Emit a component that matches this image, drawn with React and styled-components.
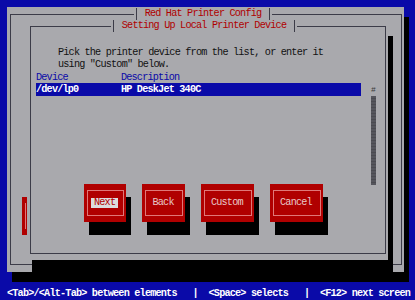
import React from 'react';
import styled, { createGlobalStyle } from 'styled-components';

const CH = 5.31;
const BLUE = '#0a0aa8';
const GRAY = '#a9a9ad';
const RED = '#b00000';
const LINE = '#3c3c48';

const GlobalStyle = createGlobalStyle`
  html, body {
    margin: 0;
    padding: 0;
    background: ${BLUE};
  }
`;

const Screen = styled.div`
  width: 415px;
  height: 300px;
  display: flex;
  flex-direction: column;
  overflow: hidden;
  background: ${BLUE};
  font-family: "Liberation Mono", "DejaVu Sans Mono", monospace;
  font-size: 10.2px;
  letter-spacing: -0.81px;
`;

const Desktop = styled.div`
  flex: 1;
  padding: 7px 0 0 7px;
`;

const Window = styled.div`
  width: ${(p) => p.$w}px;
  height: ${(p) => p.$h}px;
  box-sizing: border-box;
  display: flex;
  background: ${GRAY};
  box-shadow: ${(p) => p.$shadow};
  padding: ${(p) => p.$pad};
`;

const Frame = styled.div`
  flex: 1;
  display: flex;
  flex-direction: column;
  border: 1px solid ${LINE};
`;

const TitleTab = styled.div`
  position: relative;
  align-self: center;
  margin: -7px ${(p) => p.$shift}px 0 0;
  height: 12px;
  line-height: 12px;
  padding: 0 ${2 * CH}px;
  background: ${GRAY};
  color: ${RED};
  white-space: pre;

  &::before,
  &::after {
    content: '';
    position: absolute;
    top: 0;
    bottom: 0;
    width: 1px;
    background: ${LINE};
  }
  &::before { left: 2px; }
  &::after { right: 2px; }
`;

const Body = styled.div`
  display: flex;
  margin-top: 4px;
`;

const PeekButton = styled.div`
  width: 5px;
  height: 38px;
  box-sizing: border-box;
  margin: 173px 0 0 11px;
  padding: 6px 0 6px 3px;
  background: ${RED};

  span {
    display: block;
    height: 100%;
    border-left: 1px solid #e07878;
  }
`;

const Prompt = styled.div`
  margin: 15px 0 0 27px;
  line-height: 12px;
  color: #111;
  white-space: pre;
`;

const ListHead = styled.div`
  display: flex;
  margin-left: 5px;
  height: 12px;
  line-height: 14px;
  color: ${BLUE};
`;

const Cell = styled.span`
  width: ${(p) => (p.$cols ? `${p.$cols * CH}px` : 'auto')};
  flex: ${(p) => (p.$cols ? 'none' : '1')};
  white-space: pre;
`;

const ListBody = styled.div`
  display: flex;
  margin-left: 5px;
  gap: 10px;
`;

const Listbox = styled.div`
  width: 325px;
  height: 102px;
`;

const ListRow = styled.div`
  display: flex;
  height: 12.75px;
  line-height: 14px;
  background: ${(p) => (p.$selected ? BLUE : 'transparent')};
  color: ${(p) => (p.$selected ? '#fff' : '#111')};
  font-weight: ${(p) => (p.$selected ? 'bold' : 'normal')};
`;

const Scrollbar = styled.div`
  width: 5px;
  height: 102px;
  display: flex;
  flex-direction: column;
`;

const Thumb = styled.div`
  height: 12.75px;
  line-height: 13px;
  font-size: 8px;
  color: #3a3a3a;
  text-align: center;
  letter-spacing: 0;
`;

const Track = styled.div`
  flex: 1;
  background: repeating-linear-gradient(180deg, #55555c 0 2px, #4a4a50 2px 3px);
`;

const ButtonRow = styled.div`
  display: flex;
  gap: 16px;
  margin: -1px 0 0 53px;
`;

const Button = styled.div`
  width: ${(p) => p.$cols * CH}px;
  height: 38px;
  box-sizing: border-box;
  display: flex;
  padding: 6px 2px 6px 3px;
  background: ${RED};
  box-shadow: 5px 13px 0 #000;
`;

const ButtonFace = styled.div`
  flex: 1;
  display: flex;
  align-items: center;
  border: 1px solid #e07878;
`;

const Label = styled.span`
  margin-left: 3px;
  padding: 0 3px 0 3px;
  height: 10px;
  line-height: 10px;
  white-space: pre;
  background: ${(p) => (p.$focused ? '#dcdcdc' : 'transparent')};
  color: ${(p) => (p.$focused ? RED : '#e8c8c8')};
`;

const StatusBar = styled.div`
  height: 12px;
  line-height: 12px;
  padding-left: 7px;
  color: #fff;
  font-weight: bold;
  white-space: pre;
  background: ${BLUE};
`;

const devices = [{ dev: '/dev/lp0', desc: 'HP DeskJet 340C' }];
const buttons = [
  { label: 'Next', cols: 8, focused: true },
  { label: 'Back', cols: 8 },
  { label: 'Custom', cols: 10 },
  { label: 'Cancel', cols: 10 },
];

export default function App() {
  const rows = [...devices];
  while (rows.length < 8) rows.push(null);

  return (
    <>
      <GlobalStyle />
      <Screen>
        <Desktop>
          <Window $w={397} $h={265} $pad="7px 2px 7px 3px" $shadow="5px 10px 0 #000">
            <Frame>
              <TitleTab $shift={6}>Red Hat Printer Config</TitleTab>
              <Body>
                <PeekButton><span /></PeekButton>
                <Window $w={361} $h={236} $pad="2px 2px 6px 3px" $shadow="5px 12px 0 #000">
                  <Frame>
                    <TitleTab $shift={8}>Setting Up Local Printer Device</TitleTab>
                    <Prompt>{'Pick the printer device from the list, or enter it\nusing "Custom" below.'}</Prompt>
                    <ListHead>
                      <Cell $cols={16}>Device</Cell>
                      <Cell>Description</Cell>
                    </ListHead>
                    <ListBody>
                      <Listbox>
                        {rows.map((r, i) => (
                          <ListRow key={i} $selected={i === 0}>
                            <Cell $cols={16}>{r ? r.dev : ''}</Cell>
                            <Cell>{r ? r.desc : ''}</Cell>
                          </ListRow>
                        ))}
                      </Listbox>
                      <Scrollbar>
                        <Thumb>#</Thumb>
                        <Track />
                      </Scrollbar>
                    </ListBody>
                    <ButtonRow>
                      {buttons.map((b) => (
                        <Button key={b.label} $cols={b.cols}>
                          <ButtonFace>
                            <Label $focused={b.focused}>{b.label}</Label>
                          </ButtonFace>
                        </Button>
                      ))}
                    </ButtonRow>
                  </Frame>
                </Window>
              </Body>
            </Frame>
          </Window>
        </Desktop>
        <StatusBar>{'<Tab>/<Alt-Tab> between elements   |  <Space> selects   |  <F12> next screen'}</StatusBar>
      </Screen>
    </>
  );
}
